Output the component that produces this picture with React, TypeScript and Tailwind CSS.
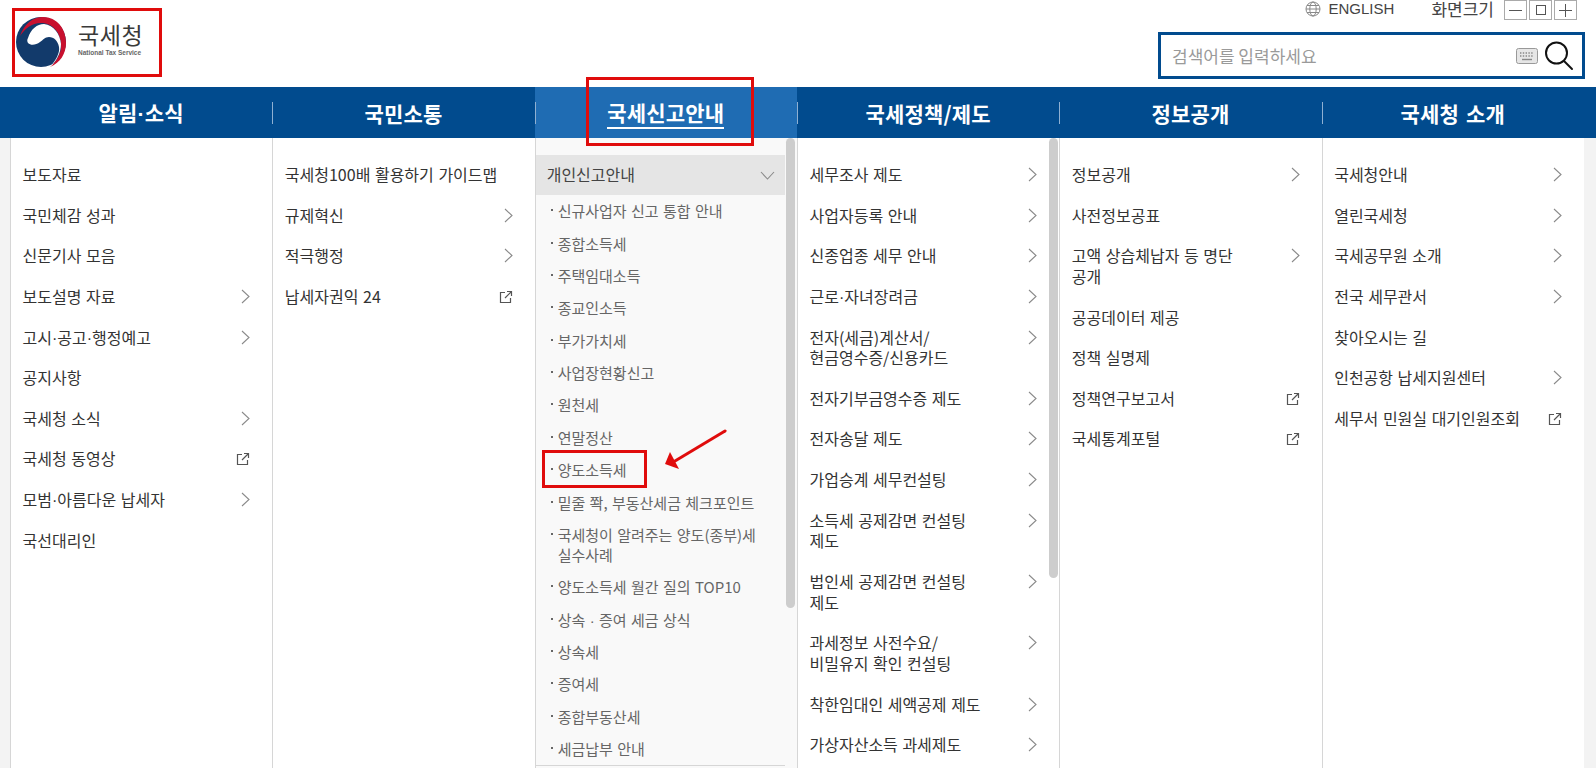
const FONT = "font-['Noto_Sans_CJK_KR','Noto_Sans',sans-serif]";

type Row = { t: string[]; icon?: "arrow" | "ext" };

const cols: Row[][] = [
  [
    { t: ["보도자료"] },
    { t: ["국민체감 성과"] },
    { t: ["신문기사 모음"] },
    { t: ["보도설명 자료"], icon: "arrow" },
    { t: ["고시·공고·행정예고"], icon: "arrow" },
    { t: ["공지사항"] },
    { t: ["국세청 소식"], icon: "arrow" },
    { t: ["국세청 동영상"], icon: "ext" },
    { t: ["모범·아름다운 납세자"], icon: "arrow" },
    { t: ["국선대리인"] },
  ],
  [
    { t: ["국세청100배 활용하기 가이드맵"] },
    { t: ["규제혁신"], icon: "arrow" },
    { t: ["적극행정"], icon: "arrow" },
    { t: ["납세자권익 24"], icon: "ext" },
  ],
  [],
  [
    { t: ["세무조사 제도"], icon: "arrow" },
    { t: ["사업자등록 안내"], icon: "arrow" },
    { t: ["신종업종 세무 안내"], icon: "arrow" },
    { t: ["근로·자녀장려금"], icon: "arrow" },
    { t: ["전자(세금)계산서/", "현금영수증/신용카드"], icon: "arrow" },
    { t: ["전자기부금영수증 제도"], icon: "arrow" },
    { t: ["전자송달 제도"], icon: "arrow" },
    { t: ["가업승계 세무컨설팅"], icon: "arrow" },
    { t: ["소득세 공제감면 컨설팅", "제도"], icon: "arrow" },
    { t: ["법인세 공제감면 컨설팅", "제도"], icon: "arrow" },
    { t: ["과세정보 사전수요/", "비밀유지 확인 컨설팅"], icon: "arrow" },
    { t: ["착한임대인 세액공제 제도"], icon: "arrow" },
    { t: ["가상자산소득 과세제도"], icon: "arrow" },
  ],
  [
    { t: ["정보공개"], icon: "arrow" },
    { t: ["사전정보공표"] },
    { t: ["고액 상습체납자 등 명단", "공개"], icon: "arrow" },
    { t: ["공공데이터 제공"] },
    { t: ["정책 실명제"] },
    { t: ["정책연구보고서"], icon: "ext" },
    { t: ["국세통계포털"], icon: "ext" },
  ],
  [
    { t: ["국세청안내"], icon: "arrow" },
    { t: ["열린국세청"], icon: "arrow" },
    { t: ["국세공무원 소개"], icon: "arrow" },
    { t: ["전국 세무관서"], icon: "arrow" },
    { t: ["찾아오시는 길"] },
    { t: ["인천공항 납세지원센터"], icon: "arrow" },
    { t: ["세무서 민원실 대기인원조회"], icon: "ext" },
  ],
];

const subItems = [
  ["신규사업자 신고 통합 안내"],
  ["종합소득세"],
  ["주택임대소득"],
  ["종교인소득"],
  ["부가가치세"],
  ["사업장현황신고"],
  ["원천세"],
  ["연말정산"],
  ["양도소득세"],
  ["밑줄 쫙, 부동산세금 체크포인트"],
  ["국세청이 알려주는 양도(종부)세", "실수사례"],
  ["양도소득세 월간 질의 TOP10"],
  ["상속 · 증여 세금 상식"],
  ["상속세"],
  ["증여세"],
  ["종합부동산세"],
  ["세금납부 안내"],
];

const navs = ["알림·소식", "국민소통", "국세신고안내", "국세정책/제도", "정보공개", "국세청 소개"];

// the CJK font's middle dot is much wider than the one in the reference
function Dotted({ text }: { text: string }) {
  const parts = text.split("·");
  return (
    <>
      {parts.map((p, i) => (
        <span key={i}>
          {i > 0 && <span className="font-['Liberation_Sans',sans-serif]">·</span>}
          {p}
        </span>
      ))}
    </>
  );
}

function Chevron() {
  return (
    <svg width="9" height="15" viewBox="0 0 9 15" fill="none" className="shrink-0 mt-[3px]">
      <path d="M1 1l7 6.5L1 14" stroke="#8a8a8a" strokeWidth="1.1" />
    </svg>
  );
}

function ExtIcon() {
  return (
    <svg width="14" height="14" viewBox="0 0 14 14" fill="none" className="shrink-0 mt-[4px] -ml-[2px]">
      <path d="M6 2.5H1.5v10h10V8" stroke="#555" strokeWidth="1.2" />
      <path d="M8 1.5h4.5V6M12.5 1.5L6 8" stroke="#555" strokeWidth="1.2" />
    </svg>
  );
}

function Logo() {
  return (
    <div className="relative w-[162px] h-[87px] shrink-0">
      <svg width="80" height="80" viewBox="0 0 80 80" className="absolute left-0 top-0">
        <circle cx="41" cy="42" r="25" fill="#123a6b" />
        <path d="M20 36C24 24 33 17 43 17C57 17 66 29 66 43C66 54 60 63 50 67C56 62 62 53 61 44C60 32 53 24 43 23C33 22 25 28 20 36Z" fill="#c8102e" />
        <path d="M28 38C31 29 37 24 44 24C54 25 60 34 61 44C61 53 56 62 50 67C56 60 60 53 59 47C58 41 54 37 49 37C45 37 43 40 40 42C36 45 31 46 28 43C27 41 27 40 28 38Z" fill="#fff" />
      </svg>
      <div className="absolute left-[78px] top-[18px] text-[23px] leading-[32px] font-normal text-[#3a3a3a] tracking-[0.6px] whitespace-nowrap">
        국세청
      </div>
      <div className="absolute left-[78px] top-[49px] font-['Liberation_Sans',sans-serif] text-[6.5px] leading-[8px] font-bold text-[#666] whitespace-nowrap">
        National Tax Service
      </div>
    </div>
  );
}

function TopBar() {
  return (
    <div className="flex flex-col items-end pr-[11px]">
      <div className="flex items-center h-[20px] mb-[12px] text-[#444]">
        <svg width="16" height="16" viewBox="0 0 16 16" fill="none" stroke="#888" strokeWidth="1" className="mr-[7px] mb-[2px]">
          <circle cx="8" cy="8" r="7" />
          <ellipse cx="8" cy="8" rx="3.2" ry="7" />
          <path d="M1 8h14M2 4.5h12M2 11.5h12" />
        </svg>
        <span className="font-['Liberation_Sans',sans-serif] text-[15px] leading-[20px] w-[103px] pb-[2px]">ENGLISH</span>
        <span className="text-[17px] leading-[20px] mr-[10px] pb-[2px]">화면크기</span>
        <div className="flex gap-[2px] mr-[8px]">
          <button className="w-[23px] h-[20px] border border-[#aaa] flex items-center justify-center">
            <span className="block w-[13px] h-px bg-[#555]" />
          </button>
          <button className="w-[23px] h-[20px] border border-[#aaa] flex items-center justify-center">
            <span className="block w-[10px] h-[10px] border border-[#555]" />
          </button>
          <button className="w-[23px] h-[20px] border border-[#aaa] flex items-center justify-center">
            <svg width="13" height="13" viewBox="0 0 13 13"><path d="M6.5 0v13M0 6.5h13" stroke="#555" strokeWidth="1" /></svg>
          </button>
        </div>
      </div>
      <div className="flex items-center w-[427px] h-[47px] border-[3px] border-[#014b8e] pl-[11px] pr-[8px]">
        <input
          placeholder="검색어를 입력하세요"
          className="flex-1 min-w-0 outline-none text-[17px] leading-[24px] placeholder:text-[#9a9a9a]"
        />
        <svg width="22" height="16" viewBox="0 0 22 16" className="mr-[6px]">
          <rect x="0.5" y="0.5" width="21" height="15" rx="2" fill="#e6e6e6" stroke="#999" />
          <path d="M4 5h14M4 8h14" stroke="#888" strokeWidth="1.4" strokeDasharray="1.4 1.4" />
          <path d="M6 11.5h10" stroke="#888" strokeWidth="1.4" />
        </svg>
        <svg width="30" height="30" viewBox="0 0 30 30" fill="none" stroke="#111" strokeWidth="2">
          <circle cx="12.5" cy="12" r="10.5" />
          <path d="M20 20l8 8" strokeLinecap="round" />
        </svg>
      </div>
    </div>
  );
}

function NavBar() {
  return (
    <div className="h-[51px] bg-[#014b8e] pl-[10px] pr-[12px] grid grid-cols-6 text-white">
      {navs.map((n, i) => (
        <div
          key={n}
          className={`relative flex items-center justify-center text-[21px] leading-[26px] font-bold tracking-[0.2px] [word-spacing:2px] ${i === 2 ? "bg-[#1f6cb3]" : ""}`}
        >
          {i > 0 && <span className="absolute left-0 top-[15px] h-[22px] w-px bg-[#8fb0d2]" />}
          {i === 2 ? (
            <span className="border-b-2 border-white pb-[2px] mt-[3px]">{n}</span>
          ) : (
            <span>
              <Dotted text={n} />
            </span>
          )}
        </div>
      ))}
    </div>
  );
}

function MenuColumn({ rows, thumb }: { rows: Row[]; thumb?: boolean }) {
  return (
    <div className="relative border-l border-[#d6d6d6] pt-[16px] pl-[11.5px] pr-[22px] text-[#333] text-[16px] leading-[20.65px] bg-white overflow-hidden">
      {rows.map((r) => (
        <div key={r.t[0]} className="flex justify-between items-start py-[10px]">
          <div className="whitespace-nowrap [word-spacing:1px]">
            {r.t.map((l) => (
              <div key={l} className="h-[20.65px]">
                <Dotted text={l} />
              </div>
            ))}
          </div>
          {r.icon === "arrow" && <Chevron />}
          {r.icon === "ext" && <ExtIcon />}
        </div>
      ))}
      {thumb && <div className="absolute right-[1px] top-0 w-[9px] h-[440px] rounded-[5px] bg-[#cdcdcd]" />}
    </div>
  );
}

function TaxColumn() {
  return (
    <div className="relative border-l border-[#d6d6d6] bg-[#f9f9f9] pt-[17px] pr-[12px] overflow-hidden">
      <div className="flex items-center justify-between h-[40px] bg-[#e5e5e5] pl-[11px] pr-[10px] text-[16px] text-[#444]">
        <span className="pb-[2px]">개인신고안내</span>
        <svg width="15" height="9" viewBox="0 0 15 9" fill="none">
          <path d="M1 1l6.5 7L14 1" stroke="#8a8a8a" strokeWidth="1.1" />
        </svg>
      </div>
      <div className="border-b border-[#d6d6d6] text-[15px] leading-[20px] text-[#666]">
        {subItems.map((s) => (
          <div key={s[0]} className="flex py-[6.2px] pl-[15px] [word-spacing:1px]">
            <span className="block w-[2px] h-[2px] bg-[#666] mt-[8px] mr-[5px] shrink-0" />
            <div className="whitespace-nowrap">
              {s.map((l) => (
                <div key={l} className="h-[20px]">
                  <Dotted text={l} />
                </div>
              ))}
            </div>
          </div>
        ))}
      </div>
      <div className="absolute right-[2px] top-0 w-[9px] h-[470px] rounded-[5px] bg-[#cdcdcd]" />
    </div>
  );
}

function Annotations() {
  return (
    <>
      <div className="absolute left-[12px] top-[8px] w-[150px] h-[69px] border-[3px] border-[#e00c0c]" />
      <div className="absolute left-[586px] top-[77px] w-[168px] h-[69px] border-[3px] border-[#e00c0c]" />
      <div className="absolute left-[542px] top-[450px] w-[105px] h-[38px] border-[3px] border-[#e00c0c]" />
      <svg width="80" height="50" viewBox="0 0 80 50" className="absolute left-[655px] top-[425px]">
        <path d="M70 6L20 36" stroke="#e00c0c" strokeWidth="3" strokeLinecap="round" />
        <path d="M10 39L24 44L15 27Z" fill="#e00c0c" />
      </svg>
    </>
  );
}

export default function App() {
  return (
    <div className={`relative w-[1596px] h-[768px] overflow-hidden bg-white ${FONT}`}>
      <div className="flex justify-between h-[87px]">
        <Logo />
        <TopBar />
      </div>
      <NavBar />
      <div className="h-[630px] bg-[#f3f3f3] pl-[10px] pr-[12px]">
        <div className="grid grid-cols-6 h-full">
          <MenuColumn rows={cols[0]} />
          <MenuColumn rows={cols[1]} />
          <TaxColumn />
          <MenuColumn rows={cols[3]} thumb />
          <MenuColumn rows={cols[4]} />
          <MenuColumn rows={cols[5]} />
        </div>
      </div>
      <Annotations />
    </div>
  );
}
